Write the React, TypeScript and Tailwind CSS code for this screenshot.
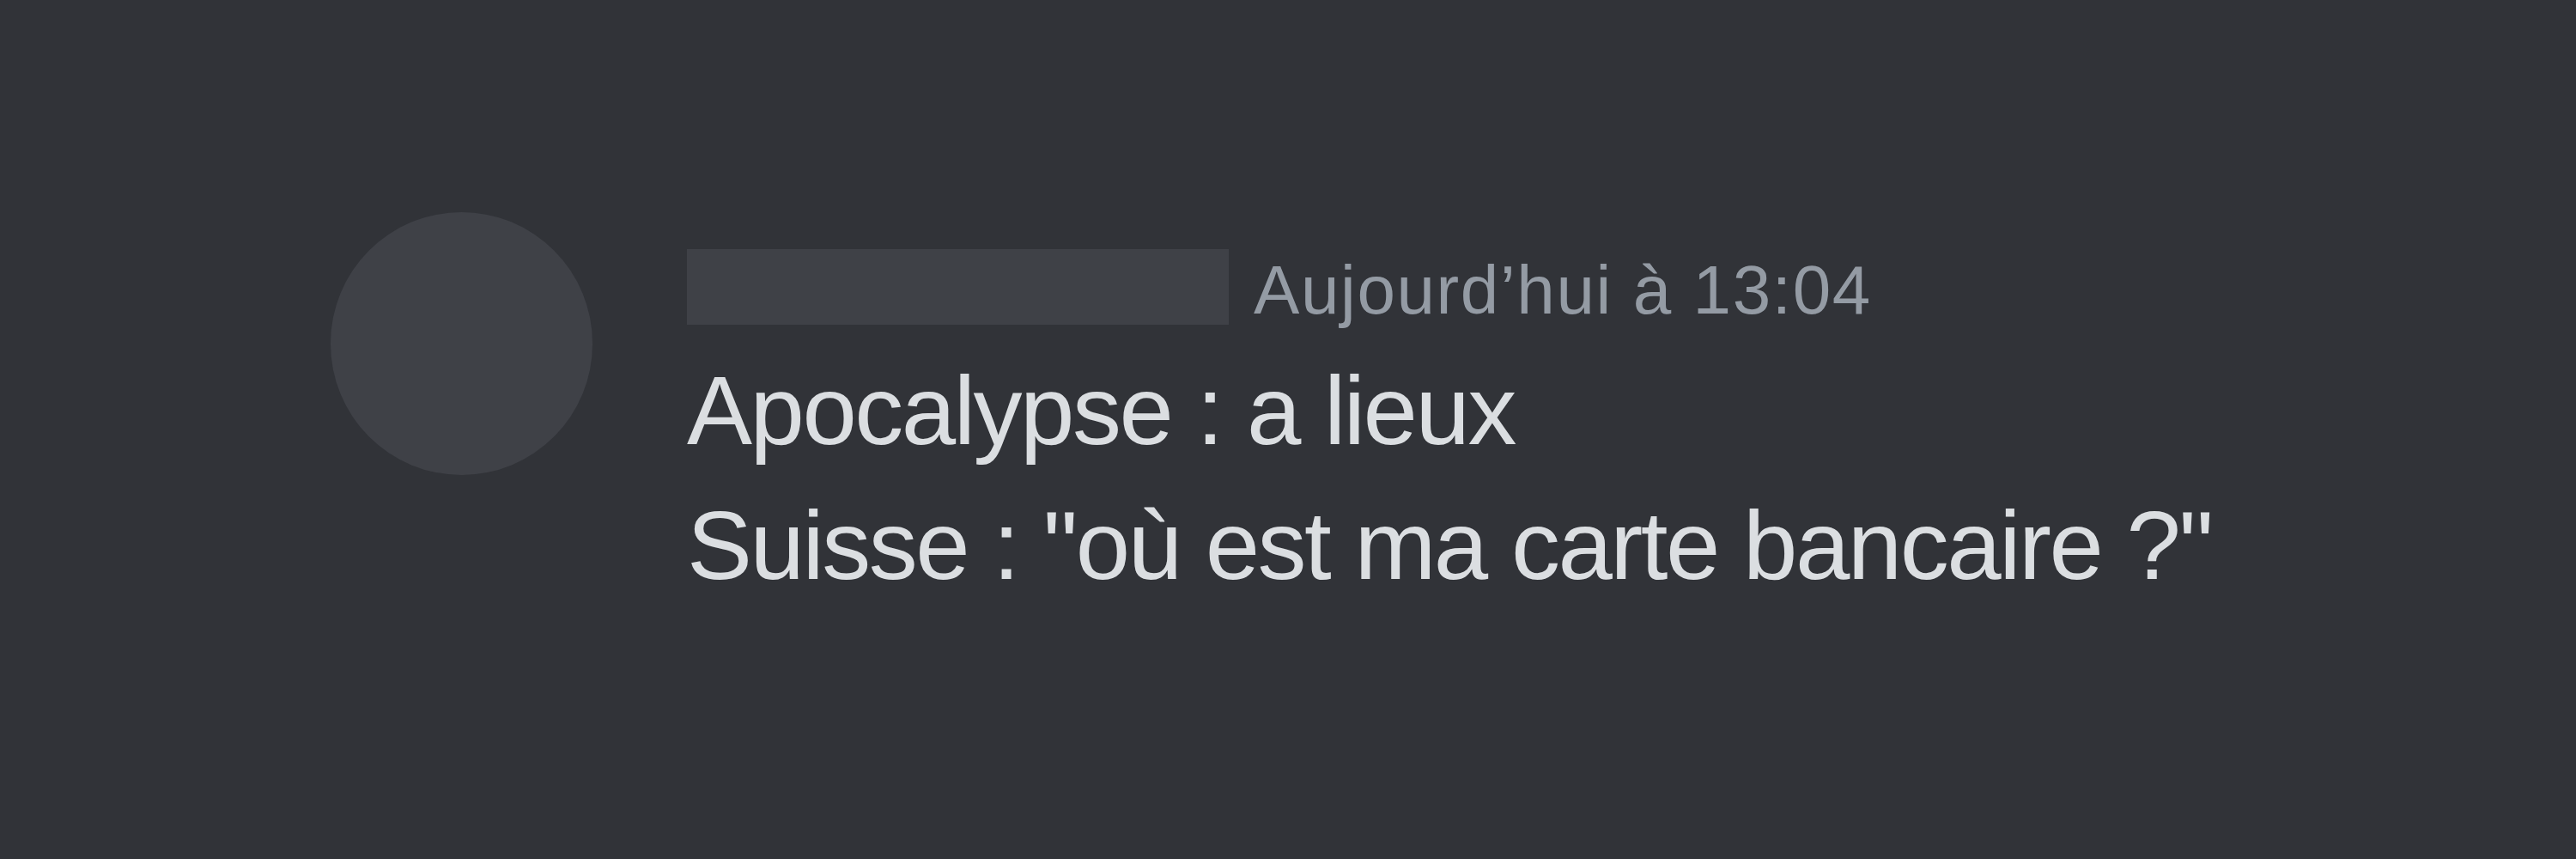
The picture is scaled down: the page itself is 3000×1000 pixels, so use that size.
export default function App() {
  const lines = ["Apocalypse : a lieux", "Suisse : \"où est ma carte bancaire ?\""];

  return (
    <div className="w-[3000px] h-[1000px] bg-[#313338] overflow-hidden" style={{ fontFamily: '"Liberation Sans", Arial, sans-serif' }}>
      <div className="flex items-start pt-[247px] pl-[385px]">
        {/* avatar placeholder */}
        <div className="w-[305px] h-[306px] rounded-full bg-[#3f4147] shrink-0" />

        <div className="ml-[110px] mt-[43px] flex flex-col">
          <div className="flex items-center gap-[29px]">
            <div className="w-[631px] h-[88px] bg-[#3f4147]" />
            <span className="pt-[8px] text-[80px] leading-none text-[#949ba4] tracking-[1.6px]">Aujourd’hui à 13:04</span>
          </div>
          <div className="mt-[21px] flex flex-col">
            {lines.map((line, i) => (
              <p key={i} className="text-[114px] leading-[157px] text-[#dbdee1] tracking-[-2.5px] whitespace-nowrap">
                {line}
              </p>
            ))}
          </div>
        </div>
      </div>
    </div>
  );
}
